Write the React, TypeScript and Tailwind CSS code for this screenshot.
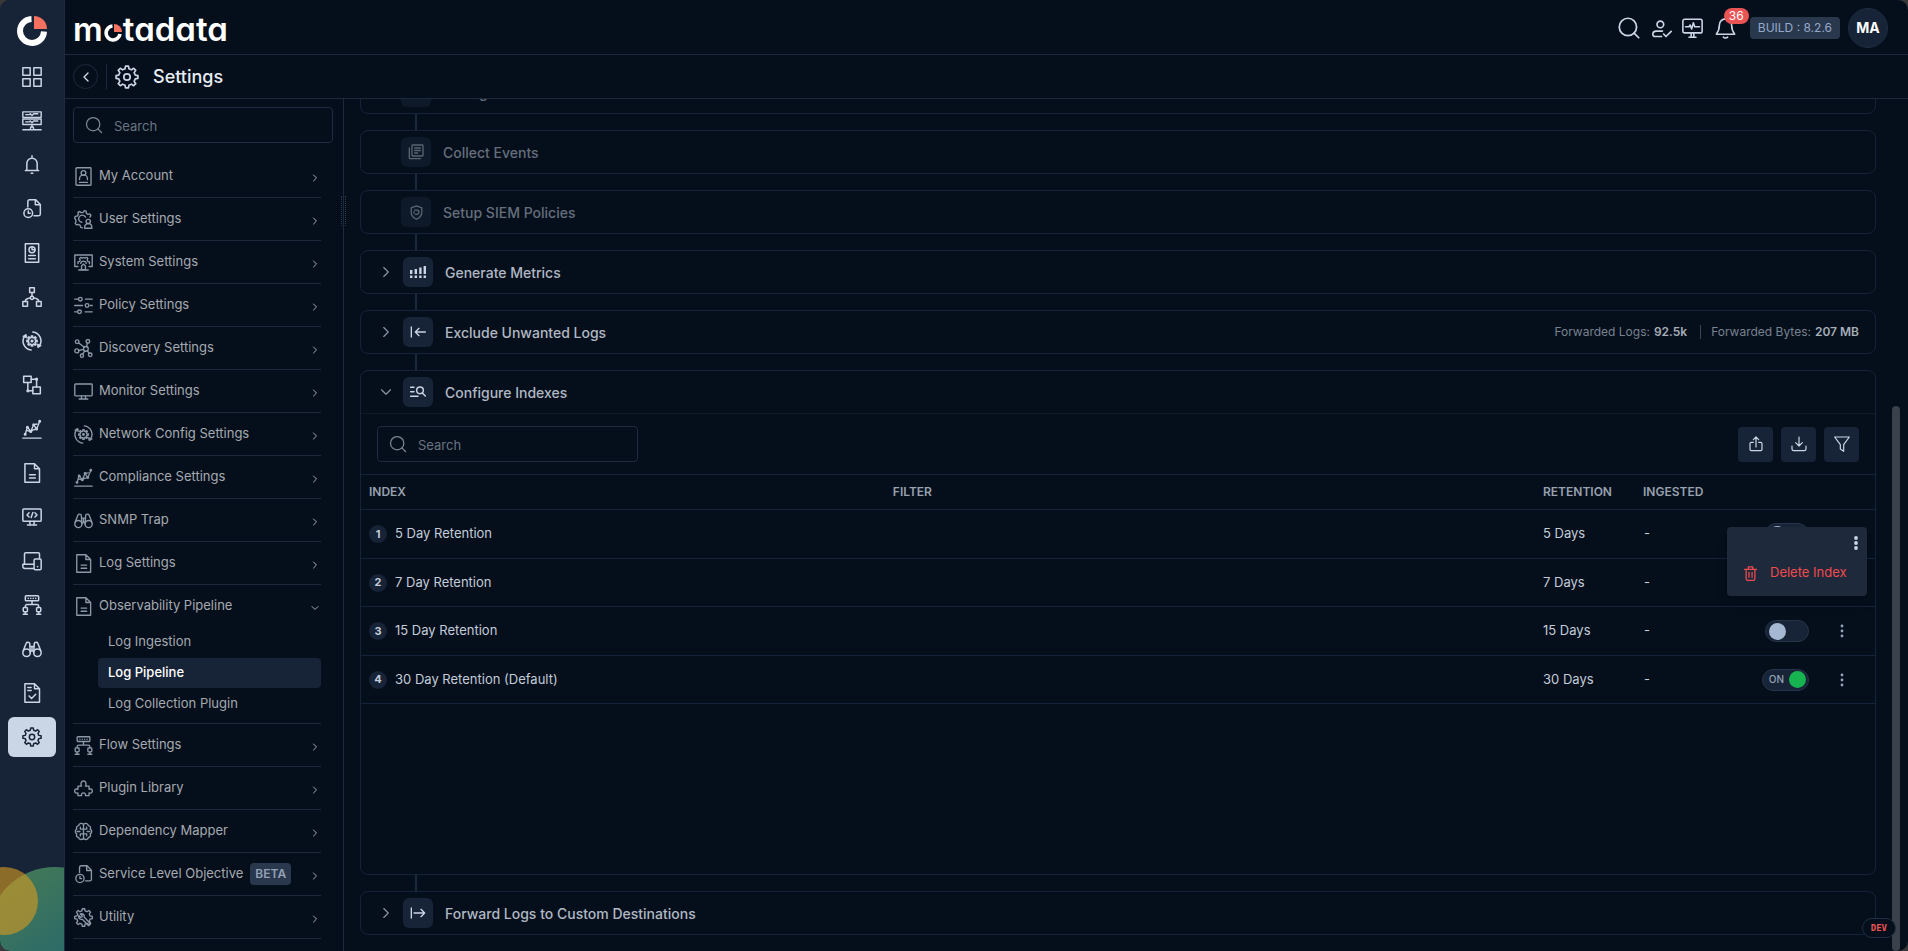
import React from "react";
import { ChevronDown, ChevronLeft, ChevronRight, Search } from "lucide-react";

type IconProps = { className?: string; sw?: number };

const Svg: React.FC<IconProps & { children: React.ReactNode }> = ({
  className = "size-5",
  sw = 1.8,
  children,
}) => (
  <svg
    viewBox="0 0 24 24"
    fill="none"
    stroke="currentColor"
    strokeWidth={sw}
    strokeLinecap="round"
    strokeLinejoin="round"
    className={`shrink-0 ${className}`}
    aria-hidden="true"
  >
    {children}
  </svg>
);

// Closed outline of a toothed wheel
const gearPath = (cx: number, cy: number, inner: number, outer: number, teeth = 8) => {
  const step = (Math.PI * 2) / teeth;
  const pts: string[] = [];
  for (let i = 0; i < teeth; i++) {
    const a = i * step - Math.PI / 2;
    [
      [inner, -0.3],
      [outer, -0.17],
      [outer, 0.17],
      [inner, 0.3],
    ].forEach(([r, k]) => {
      pts.push(
        `${(cx + r * Math.cos(a + k * step)).toFixed(2)} ${(cy + r * Math.sin(a + k * step)).toFixed(2)}`
      );
    });
  }
  return `M${pts.join("L")}Z`;
};

const Gear: React.FC<IconProps> = (p) => (
  <Svg {...p}>
    <path d={gearPath(12, 12, 8.4, 11)} />
    <circle cx="12" cy="12" r="3.2" />
  </Svg>
);

const Grid: React.FC<IconProps> = (p) => (
  <Svg {...p}>
    <rect x="1" y="1" width="8.8" height="8.8" />
    <rect x="14.2" y="1" width="8.8" height="8.8" />
    <rect x="1" y="14.2" width="8.8" height="8.8" />
    <rect x="14.2" y="14.2" width="8.8" height="8.8" />
  </Svg>
);

const Servers: React.FC<IconProps> = (p) => (
  <Svg {...p} sw={1.7}>
    <rect x="1" y="1" width="22" height="6.6" />
    <rect x="1" y="9.6" width="22" height="6.6" />
    <path d="M4.5 4.3h4l1.5-1 2 2 2-2h5M4.5 13h4l1.5-1 2 2 2-2h5M12 16.2v3M1 22.5h9M14 22.5h9" />
    <circle cx="12" cy="20.8" r="2" />
  </Svg>
);

const Bell: React.FC<IconProps> = (p) => (
  <Svg {...p}>
    <path d="M12 1v2M4 18.5h16M5.8 18.5V10a6.2 6.2 0 0 1 12.4 0v8.5M11 22h2" />
  </Svg>
);

const BellWide: React.FC<IconProps> = (p) => (
  <Svg {...p}>
    <path d="M12 1a7 7 0 0 0-7 7c0 5-1.2 7.5-3.5 10.5h21C20.2 15.5 19 13 19 8a7 7 0 0 0-7-7ZM9.5 21.8c1 1.4 4 1.4 5 0" />
  </Svg>
);

const FileClock: React.FC<IconProps> = (p) => (
  <Svg {...p}>
    <path d="M7 9.5V3a2 2 0 0 1 2-2h7.5L22 6.5V18a2 2 0 0 1-2 2h-5.5M16 1.5V7h5.5" />
    <circle cx="7.5" cy="17" r="5.2" />
    <path d="M7.5 14.5V17.2h2.3" />
  </Svg>
);

const Report: React.FC<IconProps> = (p) => (
  <Svg {...p}>
    <rect x="4" y="1" width="16" height="22" />
    <circle cx="12" cy="8" r="3.6" />
    <path d="M12 4.5V8h3.5M8 15h8M8 19h8" />
  </Svg>
);

const Topology: React.FC<IconProps> = (p) => (
  <Svg {...p}>
    <rect x="9.2" y="1" width="5.6" height="5.6" />
    <rect x="1" y="17.4" width="5.6" height="5.6" />
    <rect x="17.4" y="17.4" width="5.6" height="5.6" />
    <circle cx="12" cy="13" r="2" />
    <path d="M12 6.6V11M10 13.2c-3.5.3-6 1.5-6.2 4.2M14 13.2c3.5.3 6 1.5 6.2 4.2" />
  </Svg>
);

const NetworkConfig: React.FC<IconProps> = (p) => (
  <Svg {...p}>
    <path d={gearPath(12, 12, 4.2, 6.2)} />
    <circle cx="12" cy="12" r="1" />
    <path d="M13 1.2A10.8 10.8 0 0 1 20.5 18.5M11 22.8A10.8 10.8 0 0 1 3.5 5.5" />
    <path d="M1.2 6.2 5 4l.8 4ZM22.8 17.8 19 20l-.8-4Z" fill="currentColor" strokeWidth="1" />
  </Svg>
);

const Flow: React.FC<IconProps> = (p) => (
  <Svg {...p}>
    <rect x="2" y="1.5" width="9" height="7.5" />
    <rect x="13" y="14.5" width="9" height="8" />
    <path d="M11 5h6.5v9.5M7 9v10h6" />
    <circle cx="17.5" cy="5" r="1" fill="currentColor" />
    <circle cx="7" cy="19" r="1" fill="currentColor" />
  </Svg>
);

const Trend: React.FC<IconProps> = (p) => (
  <Svg {...p} sw={1.6}>
    <path d="M1 23h22M4 18 6.5 9.5l4 5.5 3.5-8 3.5 5L21.5 2.5M6.500 14l4 1 3-2 4-1M14 7l4-1" />
    <circle cx="3.8" cy="18.2" r="1" />
    <circle cx="6.5" cy="10" r="1" />
    <circle cx="10.5" cy="15" r="1" />
    <circle cx="14" cy="7" r="1" />
    <circle cx="17.5" cy="12" r="1" />
    <circle cx="21.2" cy="2.8" r="1" />
  </Svg>
);

const FileText: React.FC<IconProps> = (p) => (
  <Svg {...p}>
    <path d="M3.5 1H15l6 6v16H3.5ZM15 1v6h6M9 14h7M9 18h7" />
  </Svg>
);

const Code: React.FC<IconProps> = (p) => (
  <Svg {...p}>
    <rect x="1" y="2.5" width="22" height="14.5" rx="1" />
    <path d="M8.5 7 6 9.5 8.5 12M15.5 7 18 9.5 15.5 12M13 6.5l-2 6M9.5 17v4M14.5 17v4M6.5 21.5h11" />
  </Svg>
);

const Devices: React.FC<IconProps> = (p) => (
  <Svg {...p}>
    <path d="M3 16V3.5A1.5 1.5 0 0 1 4.5 2h15A1.5 1.5 0 0 1 21 3.5V9M14 16H1v2.5A2.5 2.5 0 0 0 3.5 21H14" />
    <rect x="14.5" y="9.5" width="8.5" height="13" rx="1.5" />
    <path d="M18.7 18.5v.5" />
  </Svg>
);

const FlowTree: React.FC<IconProps> = (p) => (
  <Svg {...p}>
    <rect x="4" y="1" width="16" height="6" rx="1" />
    <path d="M7.5 4v.1M10.5 4v.1M13.5 4v.1M16.5 4v.1M12 7v4.5M4 15v-1.5a2 2 0 0 1 2-2h12a2 2 0 0 1 2 2V15M4 20v2.5M20 20v2.5M1.5 23h5M17.5 23h5" />
    <rect x="1.5" y="15" width="5" height="5" rx="1" />
    <rect x="17.5" y="15" width="5" height="5" rx="1" />
  </Svg>
);

const Binoculars: React.FC<IconProps> = (p) => (
  <Svg {...p}>
    <circle cx="5.5" cy="16.5" r="4.5" />
    <circle cx="18.5" cy="16.5" r="4.5" />
    <path d="M1.5 14 5 5c.5-1.5 4-1.5 4.2.3L10 16.5M22.5 14 19 5c-.5-1.5-4-1.5-4.2.3L14 16.5M9.5 9h5M10 14.5h4M12 9v5.5" />
  </Svg>
);

const FileCheck: React.FC<IconProps> = (p) => (
  <Svg {...p}>
    <path d="M3.5 1H15l6 6v16H3.5ZM15 1v6h6M7 5.5h4M7 9h4M8.5 15.5l3 3 5-5" />
  </Svg>
);

const Account: React.FC<IconProps> = (p) => (
  <Svg {...p}>
    <rect x="2.5" y="1" width="19" height="22" rx="1" />
    <circle cx="12" cy="7.5" r="3" />
    <path d="M7 16v-1a5 5 0 0 1 10 0v1M7 19.5h10" />
  </Svg>
);

const UserGear: React.FC<IconProps> = (p) => (
  <Svg {...p}>
    <path d="M10.5 22.5l-2-.5-.7-2.5-2.6-1.3-2.2.5-1.5-2 1-2.3-.5-2.6L.8 10.500l.7-2.400 2.500-.5L5.500 5.500 5 3l2.200-1.200L9 3.300l2.500-.4L13 .8l2.400.7.2 2.5 2 1.6 2.500-.6 1.300 2-1.300 2M14.500 9A4.500 4.500 0 1 0 10 15.500" />
    <circle cx="18" cy="14.5" r="2.7" />
    <path d="M13.5 23v-1.5a4.5 4.5 0 0 1 9 0V23Z" />
  </Svg>
);

const SystemGear: React.FC<IconProps> = (p) => (
  <Svg {...p}>
    <path d="M5 17H1V2.5h22V17h-4" />
    <path d="M5 13.5v-2.2l2.2-.8.6-1.5-.8-2 1.6-1.4 2 .8 1.4-.5h1l1.4.5 2-.8L17.5 7l-.8 2 .6 1.5 2.2.8v2.2M8.5 13a3.6 3.6 0 0 1 7 0M9.5 16.5l2.5-2.5 2.5 2.5V21h-5ZM6 21.5h12" />
  </Svg>
);

const Sliders: React.FC<IconProps> = (p) => (
  <Svg {...p}>
    <path d="M.8 4H5M14.5 4H23M.8 12h10M20.5 12H23M.8 20h3.5M14 20h9" />
    <circle cx="8" cy="4" r="2.3" />
    <circle cx="16.5" cy="12" r="2.3" />
    <circle cx="7" cy="20" r="2.3" />
  </Svg>
);

const Nodes: React.FC<IconProps> = (p) => (
  <Svg {...p}>
    <circle cx="15" cy="12.5" r="3" />
    <circle cx="4" cy="3.5" r="2.3" />
    <circle cx="17.5" cy="3" r="2.3" />
    <circle cx="3.5" cy="15" r="2.5" />
    <circle cx="10" cy="21" r="2" />
    <circle cx="20.5" cy="20" r="2.3" />
    <path d="M6 5l7 5.5M16.8 5.3 16 9.5M6 14.5l6-1.3M13.5 15 11 19.2M16.8 15l2.5 3" />
  </Svg>
);

const MonitorIcon: React.FC<IconProps> = (p) => (
  <Svg {...p}>
    <rect x="1" y="2.5" width="22" height="15" rx="1" />
    <path d="M9.5 17.5V21M14.5 17.5V21M6.5 21.5h11" />
  </Svg>
);

const Puzzle: React.FC<IconProps> = (p) => (
  <Svg {...p}>
    <path d="M5 9h4.5c-1.5-3-.5-6.5 2.5-6.5S16 6 14.5 9H19v4c2-1 4.2 0 4.2 2.2S21 18.5 19 17.5V21h-4.5c.5-2-.7-3.5-2.5-3.5S9 19 9.5 21H5v-3.5c-2 1-4.2 0-4.2-2.3S3 12 5 13Z" />
  </Svg>
);

const Brain: React.FC<IconProps> = (p) => (
  <Svg {...p}>
    <path d="M12 2.5v19M12 3C9 .8 6 2 6 4.5 3.5 4.5 2.5 7 3.5 9c-2.5 1.5-2.5 4.5 0 6-1 2.5 0 4.5 2.5 4.5 0 2.5 3 3.5 6 1.5M12 3c3-2.2 6-1 6 1.5 2.5 0 3.5 2.5 2.5 4.5 2.5 1.5 2.5 4.5 0 6 1 2.5 0 4.5-2.5 4.5 0 2.5-3 3.5-6 1.5M4 12h3.5M20 12h-3.5M8 6.5v2.5h4M16 6.5v2.5h-4M8 17.5V15h4M16 17.5V15h-4" />
  </Svg>
);

const Wrench: React.FC<IconProps> = (p) => (
  <Svg {...p}>
    <path d={gearPath(12, 12, 8.6, 11.2)} />
    <path d="M8 7.5l2.5 2.5-.7 1.5-1.5.3L6 9.5c-.8 3 1.2 5.5 4.5 4.8l8 8 2.5-2.5-8-8c.5-3.3-2-5.2-5-4.3Z" />
  </Svg>
);

const UserCheck: React.FC<IconProps> = (p) => (
  <Svg {...p} sw={2}>
    <circle cx="10" cy="6.5" r="4" />
    <path d="M11.5 21H3.500A2.500 2.500 0 0 1 1 18.500C1 16 3 14.500 5 14.500h7.500M14 18l2.800 3L23 14.800" />
  </Svg>
);

const MonitorPulse: React.FC<IconProps> = (p) => (
  <Svg {...p}>
    <rect x="1" y="1.5" width="22" height="15.5" rx="2" />
    <path d="M4 10h4l1.3-2 1.7 4.5 2-7 1.5 4.500h5.500M10.500 17v4M13.500 17v4M8 22h8" />
  </Svg>
);

const Library: React.FC<IconProps> = (p) => (
  <Svg {...p} sw={2}>
    <rect x="6" y="1.5" width="16.5" height="16.5" rx="1" />
    <path d="M2 6v15a1 1 0 0 0 1 1h15.5M10 6h8.5M10 9.8h8.5M10 13.5h4.5" />
  </Svg>
);

const Shield: React.FC<IconProps> = (p) => (
  <Svg {...p} sw={2}>
    <path d="M12 1.5 3.5 4.5v7c0 5 3.5 9 8.5 11 5-2 8.5-6 8.5-11v-7Z" />
    <path d="M9 8h3.5a3.5 3.5 0 0 1 0 7H10M8 10.5v2.5" />
  </Svg>
);

const Bars: React.FC<IconProps> = ({ className }) => (
  <svg viewBox="0 0 16 12" className={className} fill="currentColor" aria-hidden="true">
    <path d="M0 4h2.4v4H0zM4.6 3H7v5H4.600zM9.200 1.500h2.400v6.500H9.200zM13.600 0H16v8h-2.400zM0 9.500h2.400V12H0zM4.600 9.500H7V12H4.600zM9.200 9.500h2.400V12H9.200zM13.600 9.500H16V12h-2.400z" />
  </svg>
);

const ArrowIn: React.FC<IconProps> = (p) => (
  <Svg {...p} sw={2}>
    <path d="M2 4.5v15M23 12H8M13.5 6.5 8 12l5.5 5.5" />
  </Svg>
);

const ArrowOut: React.FC<IconProps> = (p) => (
  <Svg {...p} sw={2}>
    <path d="M2 4.5v15M6 12h16M16.5 6.5 22 12l-5.5 5.5" />
  </Svg>
);

const ListSearch: React.FC<IconProps> = (p) => (
  <Svg {...p} sw={2.2}>
    <path d="M1 5h5M1 11.5h5M1 18.5h11M18.5 13.5 23 18" />
    <circle cx="15" cy="9.5" r="5" />
  </Svg>
);

const Share: React.FC<IconProps> = (p) => (
  <Svg {...p}>
    <path d="M8 9.5H5a2 2 0 0 0-2 2V20a2 2 0 0 0 2 2h14a2 2 0 0 0 2-2v-8.500a2 2 0 0 0-2-2h-3M12 16.500V1.500M8 5.500l4-4 4 4" />
  </Svg>
);

const Download: React.FC<IconProps> = (p) => (
  <Svg {...p}>
    <path d="M1.5 15v4.5A2.5 2.5 0 0 0 4 22h16a2.5 2.5 0 0 0 2.5-2.5V15M12 1.5V15M7 10l5 5 5-5" />
  </Svg>
);

const Funnel: React.FC<IconProps> = (p) => (
  <Svg {...p}>
    <path d="M1 1.5h22L14.5 13v10L9.5 19.5V13Z" />
  </Svg>
);

const Trash: React.FC<IconProps> = (p) => (
  <Svg {...p} sw={2}>
    <path d="M2.5 5.5h19M5 5.5v15A2.5 2.5 0 0 0 7.5 23h9a2.5 2.5 0 0 0 2.5-2.5v-15M8.5 5.5V1.500h7v4M9.500 10v8M14.500 10v8" />
  </Svg>
);

const Dots: React.FC<{ r: number }> = ({ r }) => (
  <svg viewBox="0 0 6 16" className="h-4 w-1.5" fill="currentColor" aria-hidden="true">
    <circle cx="3" cy="3" r={r} />
    <circle cx="3" cy="8" r={r} />
    <circle cx="3" cy="13" r={r} />
  </svg>
);

const railItems = [
  { label: "Dashboards", Icon: Grid },
  { label: "Inventory", Icon: Servers },
  { label: "Alerts", Icon: Bell },
  { label: "SLO", Icon: FileClock },
  { label: "Reports", Icon: Report },
  { label: "Topology", Icon: Topology },
  { label: "Network Config", Icon: NetworkConfig },
  { label: "Flows", Icon: Flow },
  { label: "Metrics", Icon: Trend },
  { label: "Logs", Icon: FileText },
  { label: "Terminal", Icon: Code },
  { label: "Devices", Icon: Devices },
  { label: "NetFlow", Icon: FlowTree },
  { label: "Trap Explorer", Icon: Binoculars },
  { label: "Audit", Icon: FileCheck },
  { label: "Settings", Icon: Gear },
];

const menuItems: { label: string; Icon: React.FC<IconProps>; beta?: boolean; children?: string[] }[] = [
  { label: "My Account", Icon: Account },
  { label: "User Settings", Icon: UserGear },
  { label: "System Settings", Icon: SystemGear },
  { label: "Policy Settings", Icon: Sliders },
  { label: "Discovery Settings", Icon: Nodes },
  { label: "Monitor Settings", Icon: MonitorIcon },
  { label: "Network Config Settings", Icon: NetworkConfig },
  { label: "Compliance Settings", Icon: Trend },
  { label: "SNMP Trap", Icon: Binoculars },
  { label: "Log Settings", Icon: FileText },
  {
    label: "Observability Pipeline",
    Icon: FileText,
    children: ["Log Ingestion", "Log Pipeline", "Log Collection Plugin"],
  },
  { label: "Flow Settings", Icon: FlowTree },
  { label: "Plugin Library", Icon: Puzzle },
  { label: "Dependency Mapper", Icon: Brain },
  { label: "Service Level Objective", Icon: FileClock, beta: true },
  { label: "Utility", Icon: Wrench },
];

const rows = [
  { id: 1, name: "5 Day Retention", retention: "5 Days", on: false },
  { id: 2, name: "7 Day Retention", retention: "7 Days", on: false },
  { id: 3, name: "15 Day Retention", retention: "15 Days", on: false },
  { id: 4, name: "30 Day Retention (Default)", retention: "30 Days", on: true },
];

const LogoMark: React.FC = () => (
  <svg viewBox="0 0 30 30" className="size-[30px]" aria-hidden="true">
    <path d="M14.5 3A12 12 0 1 0 27 15.5" fill="none" stroke="#fff" strokeWidth="6" />
    <path d="M17 0A13 13 0 0 1 30 13H17Z" fill="#f4705f" />
  </svg>
);

const Wordmark: React.FC = () => (
  <span className="pt-1 text-[33px] leading-none font-semibold text-white [font-feature-settings:'cv11']">
    m
    <span className="relative text-transparent">
      o
      <svg viewBox="0 0 18 18" className="absolute bottom-[7px] left-px size-[18px]" aria-hidden="true">
        <path d="M8.5 2A7 7 0 1 0 16 10" fill="none" stroke="#fff" strokeWidth="3.6" />
        <path d="M10 0a8 8 0 0 1 8 8h-8Z" fill="#f4705f" />
      </svg>
    </span>
    tadata
  </span>
);

const Rail: React.FC = () => (
  <nav className="flex w-[65px] shrink-0 flex-col items-center border-r border-[#1d2a3d] bg-[#172336]">
    <a href="#home" className="mt-4 mb-[11px]" aria-label="Home">
      <LogoMark />
    </a>
    <div className="flex flex-col gap-1">
      {railItems.map(({ label, Icon }) => (
        <button
          key={label}
          aria-label={label}
          className={
            label === "Settings"
              ? "flex h-10 w-12 items-center justify-center rounded-md bg-[#cad5e6] text-[#172336]"
              : "flex h-10 w-12 items-center justify-center text-[#cbd5e6]"
          }
        >
          <Icon />
        </button>
      ))}
    </div>
    <svg viewBox="0 0 64 84" className="mt-auto w-full" aria-hidden="true">
      <defs>
        <linearGradient id="leaf" x1="0" y1="0" x2="0.7" y2="1">
          <stop offset="0.2" stopColor="#40775a" />
          <stop offset="0.8" stopColor="#28686b" />
        </linearGradient>
      </defs>
      <circle cx="55" cy="67" r="67" fill="url(#leaf)" />
      <circle cx="4" cy="34" r="34" fill="#d39a22" fillOpacity="0.62" />
    </svg>
  </nav>
);

const SearchBox: React.FC<{ label: string; className: string }> = ({ label, className }) => (
  <div className={`flex h-9 items-center rounded border border-[#1d2b40] pl-[10px] ${className}`}>
    <Search className="size-5 shrink-0 text-[#7d8794]" strokeWidth={1.5} />
    <input
      type="text"
      aria-label={label}
      placeholder="Search"
      className="ml-[10px] h-full min-w-0 flex-1 bg-transparent pt-0.5 text-[13px] text-[#c4ccd9] outline-none placeholder:text-[#6b7480]"
    />
  </div>
);

const Sidebar: React.FC = () => (
  <aside className="relative flex w-[279px] shrink-0 flex-col border-r border-[#1d2a3d] pt-2 pl-2">
    <SearchBox label="Search settings" className="mr-[10px] shrink-0" />
    <ul className="mt-3 mr-[22px] min-h-0 overflow-hidden">
      {menuItems.map(({ label, Icon, beta, children }) => (
        <li key={label} className="border-b border-[#1d2a3d]">
          <button className="flex h-[42px] w-full items-center pl-px text-[13px] text-[#a6aab0]">
            <Icon className="size-[19px] text-[#8c98a8]" sw={1.7} />
            <span className="ml-1.5">{label}</span>
            {beta && (
              <span className="ml-[7px] rounded bg-[#2a384e] px-[5px] text-xs leading-[22px] font-semibold text-[#94a1b5]">
                BETA
              </span>
            )}
            {children ? (
              <ChevronDown className="mt-1 ml-auto size-3" strokeWidth={2} />
            ) : (
              <ChevronRight className="mt-1 ml-auto size-3" strokeWidth={2} />
            )}
          </button>
          {children && (
            <ul className="flex flex-col gap-px pb-1 pl-[25px]">
              {children.map((child) => (
                <li key={child}>
                  <a
                    href="#pipeline"
                    className={
                      child === "Log Pipeline"
                        ? "flex h-[30px] items-center rounded bg-[#172336] px-[10px] text-[13px] font-medium text-white"
                        : "flex h-[30px] items-center px-[10px] text-[13px] text-[#a6aab0]"
                    }
                  >
                    {child}
                  </a>
                </li>
              ))}
            </ul>
          )}
        </li>
      ))}
    </ul>
    <div className="absolute top-[97px] -right-[3px] h-[30px] w-[5px] border-x border-dotted border-[#2a384e]" />
  </aside>
);

const Header: React.FC = () => (
  <header className="flex h-[55px] shrink-0 items-center border-b border-[#1d2a3d] pr-5 pl-2">
    <Wordmark />
    <div className="ml-auto flex items-center pt-0.5 text-[#cbd5e6]">
      <button aria-label="Search" className="mr-[10px]">
        <Search className="size-[26px]" strokeWidth={1.6} />
      </button>
      <button aria-label="Assigned users" className="mt-0.5 mr-[10px]">
        <UserCheck className="size-5" />
      </button>
      <button aria-label="System health" className="mr-3">
        <MonitorPulse className="size-[21px]" />
      </button>
      <button aria-label="Notifications" className="relative mr-[14px]">
        <BellWide className="size-[21px]" />
        <span className="absolute -top-[10px] left-[9px] rounded-full bg-[#ea5455] px-[5px] text-xs leading-4 text-white">
          36
        </span>
      </button>
      <span className="mr-2 rounded bg-[#2a384e] px-2 text-xs leading-[22px] text-[#94a9c9]">
        BUILD : 8.2.6
      </span>
      <button className="size-10 rounded-full border border-[#1f2d42] bg-[#172336] text-sm font-bold text-white">
        MA
      </button>
    </div>
  </header>
);

const TitleBar: React.FC = () => (
  <div className="flex h-11 shrink-0 items-center border-b border-[#1d2a3d] pl-2">
    <button
      aria-label="Back"
      className="flex size-[25px] items-center justify-center rounded-full border border-[#1d2a3d] text-[#cbd5e6]"
    >
      <ChevronLeft className="size-4" strokeWidth={2} />
    </button>
    <div className="mx-2 h-[25px] w-px bg-[#1d2a3d]" />
    <Gear className="size-6 text-[#cbd5e6]" sw={1.7} />
    <h1 className="ml-[14px] text-lg font-medium text-[#e8edf5]">Settings</h1>
  </div>
);

const Connector: React.FC = () => <div className="ml-[55px] h-4 w-0.5 shrink-0 bg-[#1b293d]" />;

const StepHeader: React.FC<{
  title: string;
  icon: React.ReactNode;
  disabled?: boolean;
  open?: boolean;
  children?: React.ReactNode;
}> = ({ title, icon, disabled, open, children }) =>
  disabled ? (
    <div className="flex h-[42px] items-center pl-10">
      <span className="flex size-[30px] items-center justify-center rounded-md bg-[#0e1a29] text-[#5b6573]">
        {icon}
      </span>
      <h2 className="ml-3 pt-0.5 text-sm font-medium text-[#656e7b]">{title}</h2>
    </div>
  ) : (
    <div className="flex h-[42px] items-center pr-4 pl-4">
      <button aria-label={title} aria-expanded={!!open} className="text-[#8c98a8]">
        {open ? (
          <ChevronDown className="size-[18px]" strokeWidth={1.5} />
        ) : (
          <ChevronRight className="size-[18px]" strokeWidth={1.5} />
        )}
      </button>
      <span className="ml-2 flex size-[30px] items-center justify-center rounded-md bg-[#172336] text-[#cbd5e6]">
        {icon}
      </span>
      <h2 className="ml-3 pt-0.5 text-sm font-medium text-[#b1b8c3]">{title}</h2>
      {children}
    </div>
  );

const cardClass = "shrink-0 rounded-lg border border-[#15233a]";

const Toggle: React.FC<{ on: boolean; label: string }> = ({ on, label }) => (
  <label className="flex h-[22px] items-center rounded-full border border-[#263449] bg-[#172336] px-0.5">
    <input type="checkbox" className="sr-only" defaultChecked={on} aria-label={label} />
    {on ? (
      <>
        <span className="mr-[5px] ml-1 text-[10px] font-medium text-[#94a3b8]">ON</span>
        <span className="size-[17px] rounded-full bg-[#17b351]" />
      </>
    ) : (
      <span className="mr-5 ml-px size-[17px] rounded-full bg-[#a5b7d2]" />
    )}
  </label>
);

const RowMenu: React.FC = () => (
  <div className="absolute top-4 right-2 z-10 w-[140px] rounded bg-[#1e293b] pb-2 shadow-lg">
    <div className="flex h-8 items-center justify-end pr-2 text-[#cbd5e6]">
      <Dots r={1.9} />
    </div>
    <button className="flex h-[29px] w-full items-center pl-4 text-[13px] text-[#f04b4e]">
      <Trash className="size-[15px]" />
      <span className="ml-3">Delete Index</span>
    </button>
  </div>
);

const IndexTable: React.FC = () => (
  <table className="w-full table-fixed border-separate border-spacing-0 text-left text-[13px]">
    <thead>
      <tr className="text-xs text-[#98a1ae]">
        <th className="h-9 w-[34.6%] border-y border-[#15233a] px-2 font-semibold">INDEX</th>
        <th className="border-y border-[#15233a] px-2 font-semibold">FILTER</th>
        <th className="w-[100px] border-y border-[#15233a] px-2 font-semibold">RETENTION</th>
        <th className="w-[100px] border-y border-[#15233a] px-2 font-semibold">INGESTED</th>
        <th className="w-[140px] border-y border-[#15233a]" aria-label="Actions" />
      </tr>
    </thead>
    <tbody className="text-[#c4ccd9]">
      {rows.map((row) => (
        <tr key={row.id} className="odd:h-[49px] even:h-12">
          <td className="border-b border-[#15233a] px-2">
            <span className="flex items-center">
              <span className="flex size-[18px] items-center justify-center rounded-full bg-[#172336] text-[11px] font-bold">
                {row.id}
              </span>
              <span className="ml-2">{row.name}</span>
            </span>
          </td>
          <td className="border-b border-[#15233a] px-2" />
          <td className="border-b border-[#15233a] px-2">{row.retention}</td>
          <td className="border-b border-[#15233a] px-[9px]">-</td>
          <td className="border-b border-[#15233a]">
            <div className="relative flex h-[47px] items-center justify-end pr-[21px]">
              <Toggle on={row.on} label={row.name} />
              <button
                aria-label={`Actions for ${row.name}`}
                className="ml-[21px] flex size-6 items-center justify-center text-[#94a3b8]"
              >
                <Dots r={1.4} />
              </button>
              {row.id === 1 && <RowMenu />}
            </div>
          </td>
        </tr>
      ))}
    </tbody>
  </table>
);

const toolClass = "flex size-[35px] items-center justify-center rounded bg-[#172336] text-[#cbd5e6]";

const Pipeline: React.FC = () => (
  <main className="flex min-w-0 flex-1">
    <div className="flex min-w-0 flex-1 flex-col justify-end overflow-hidden px-4 pb-4">
      <section className={cardClass}>
        <StepHeader title="Configure Alerts" icon={<FileText className="size-3" />} disabled />
      </section>
      <Connector />
      <section className={cardClass}>
        <StepHeader title="Collect Events" icon={<Library className="size-4" />} disabled />
      </section>
      <Connector />
      <section className={cardClass}>
        <StepHeader title="Setup SIEM Policies" icon={<Shield className="size-[15px]" />} disabled />
      </section>
      <Connector />
      <section className={cardClass}>
        <StepHeader title="Generate Metrics" icon={<Bars className="h-3 w-4" />} />
      </section>
      <Connector />
      <section className={cardClass}>
        <StepHeader title="Exclude Unwanted Logs" icon={<ArrowIn className="size-4" />}>
          <p className="ml-auto flex items-center text-xs text-[#78828f]">
            Forwarded Logs: <b className="ml-1 font-semibold text-[#a6adb8]">92.5k</b>
            <span className="mr-[10px] ml-[13px] h-[14px] w-px bg-[#3a4453]" />
            Forwarded Bytes: <b className="ml-1 font-semibold text-[#a6adb8]">207 MB</b>
          </p>
        </StepHeader>
      </section>
      <Connector />
      <section className={cardClass}>
        <StepHeader title="Configure Indexes" icon={<ListSearch className="size-4" />} open />
        <div className="flex items-center gap-2 border-t border-[#0f1b2b] px-4 py-3">
          <SearchBox label="Search indexes" className="mr-auto w-[261px]" />
          <button aria-label="Share" className={toolClass}>
            <Share className="size-4" />
          </button>
          <button aria-label="Download" className={toolClass}>
            <Download className="size-4" />
          </button>
          <button aria-label="Filter" className={toolClass}>
            <Funnel className="size-4" />
          </button>
        </div>
        <div className="min-h-[400px]">
          <IndexTable />
        </div>
      </section>
      <Connector />
      <section className={cardClass}>
        <StepHeader title="Forward Logs to Custom Destinations" icon={<ArrowOut className="size-4" />} />
      </section>
    </div>
    <div className="mr-2 flex w-2 items-end">
      <div className="h-[64%] w-2 rounded bg-[#3b404a]" />
    </div>
  </main>
);

const App: React.FC = () => (
  <div className="h-screen bg-[#38383a] font-['Inter',sans-serif]">
    <div className="relative flex h-full overflow-hidden rounded-[10px] bg-[#050f1c]">
      <Rail />
      <div className="flex min-w-0 flex-1 flex-col">
        <Header />
        <TitleBar />
        <div className="flex min-h-0 flex-1">
          <Sidebar />
          <Pipeline />
        </div>
      </div>
      <div className="absolute right-3 bottom-[13px] rounded-full border border-[#1f2d42] bg-[#050f1c] px-2 font-['DejaVu_Sans_Mono',monospace] text-[9px] leading-[18px] font-bold text-[#ea5455]">
        DEV
      </div>
    </div>
  </div>
);

export default App;
